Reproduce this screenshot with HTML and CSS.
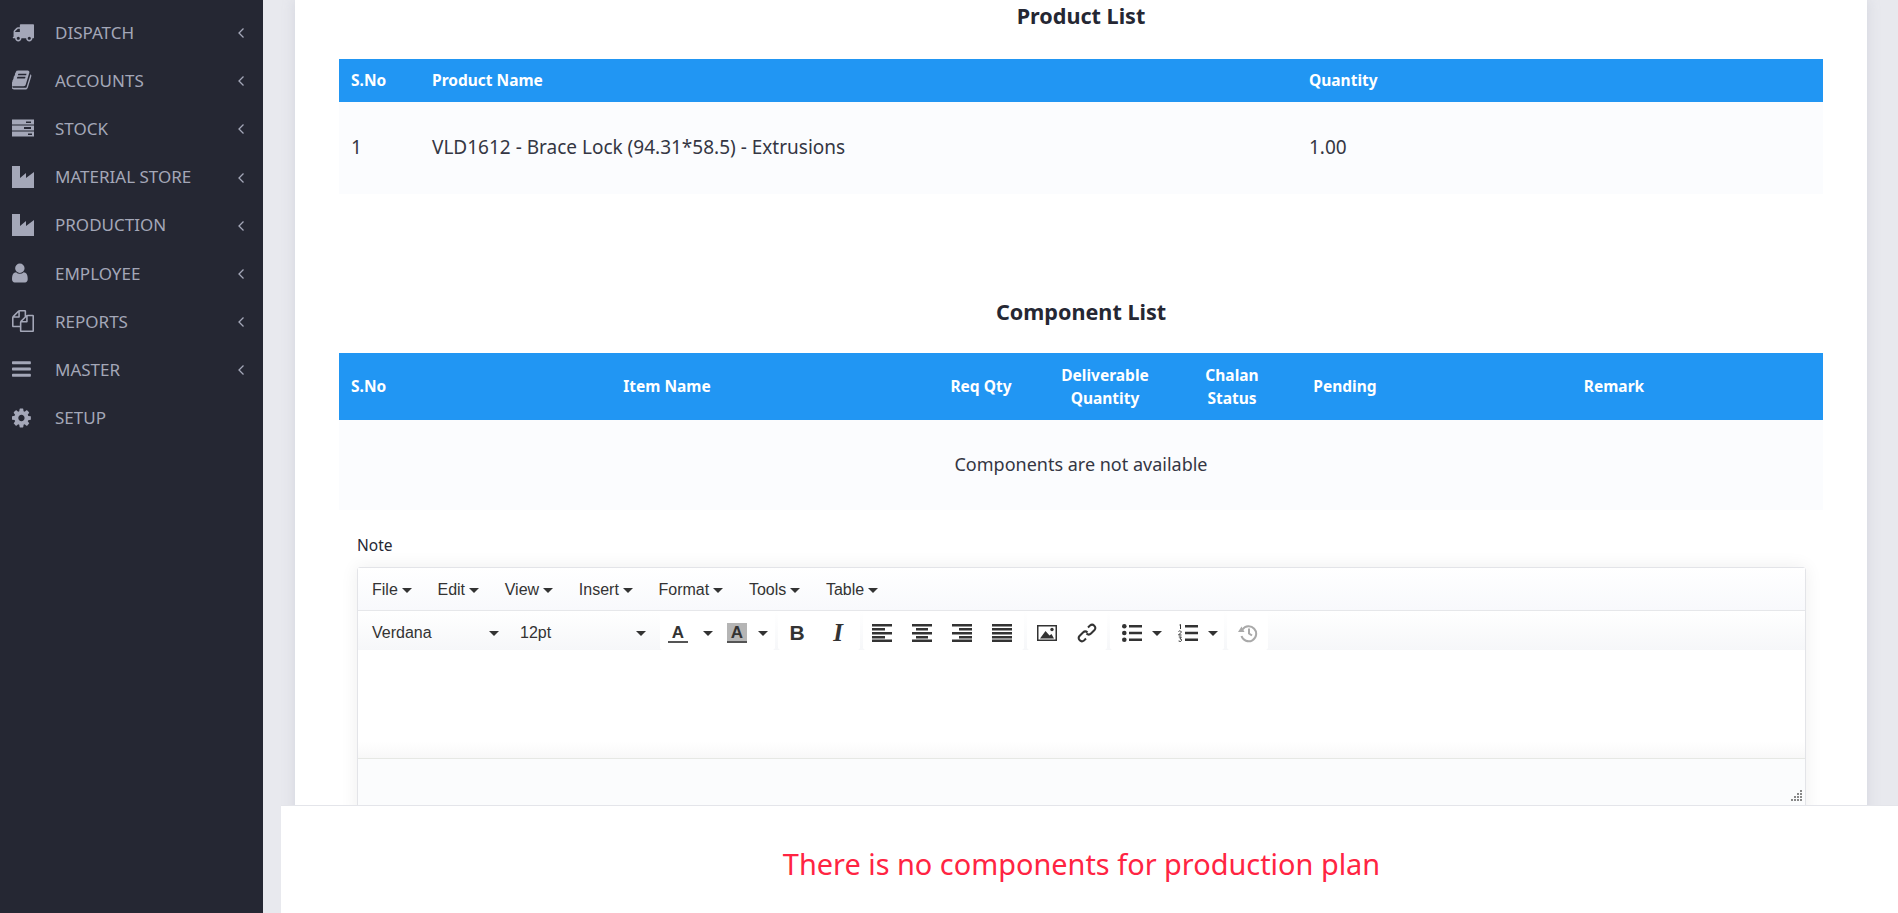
FILE: index.html
```html
<!DOCTYPE html>
<html lang="en">
<head>
<meta charset="utf-8">
<title>Production Plan</title>
<link rel="stylesheet" href="styles.css">
</head>
<body>
<aside class="sidebar">
  <ul class="nav">
    <li class="nav-item"><svg class="nav-icon" viewBox="0 0 1792 1792"><path d="M640 1408q0-52-38-90t-90-38-90 38-38 90 38 90 90 38 90-38 38-90zm-384-512h384v-256h-158q-13 0-22 9l-195 195q-9 9-9 22v30zm1280 512q0-52-38-90t-90-38-90 38-38 90 38 90 90 38 90-38 38-90zm256-1088v1024q0 15-4 26.5t-13.5 18.5-16.5 11.5-23.5 6-22.5 2-25.5 0-22.5-.5q0 106-75 181t-181 75-181-75-75-181h-384q0 106-75 181t-181 75-181-75-75-181h-64q-3 0-22.5.5t-25.5 0-22.5-2-23.5-6-16.5-11.5-13.5-18.5-4-26.5q0-26 19-45t45-19v-320q0-8-.5-35t0-38 2.5-34.5 6.5-37 14-30.5 22.5-30l198-198q19-19 50.5-32t58.5-13h160v-192q0-26 19-45t45-19h1024q26 0 45 19t19 45z"/></svg><span class="nav-label">DISPATCH</span><svg class="nav-caret" viewBox="0 0 8 12"><path d="M6.5 1.5 2 6l4.500 4.500"/></svg></li>
    <li class="nav-item"><svg class="nav-icon" viewBox="90 0 1792 1792"><path d="M1639 478q40 57 18 129l-275 906q-19 64-76.500 107.500t-122.500 43.500h-923q-77 0-148.500-53.500t-99.500-131.500q-24-67-2-127 0-4 3-27t4-37q1-8-3-21.500t-3-19.500q2-11 8-21t16.500-23.500 16.500-23.500q23-38 45-91.500t30-91.500q3-10 .5-30t-.5-28q3-11 17-28t17-23q21-36 42-92t25-90q1-9-2.500-32t.5-28q4-13 22-30.500t22-22.500q19-26 42.500-84.500t27.500-96.500q1-8-3-25.500t-2-26.500q2-8 9-18t18-23 17-21q8-12 16.500-30.500t15-35 16-36 19.500-32 26.500-23.500 36-11.500 47.500 5.500l-1 3q38-9 51-9h761q74 0 114 56t18 130l-274 906q-36 119-71.500 153.500t-128.500 34.500h-869q-27 0-38 15-11 16-1 43 24 70 144 70h923q29 0 56-15.500t35-41.500l300-987q7-22 5-57 38 15 59 43zm-1064 2q-4 13 2 22.500t20 9.500h608q13 0 25.500-9.500t16.500-22.500l21-64q4-13-2-22.500t-20-9.500h-608q-13 0-25.500 9.500t-16.500 22.500zm-83 256q-4 13 2 22.500t20 9.500h608q13 0 25.500-9.500t16.500-22.500l21-64q4-13-2-22.500t-20-9.500h-608q-13 0-25.500 9.500t-16.500 22.500z"/></svg><span class="nav-label">ACCOUNTS</span><svg class="nav-caret" viewBox="0 0 8 12"><path d="M6.500 1.500 2 6l4.500 4.500"/></svg></li>
    <li class="nav-item"><svg class="nav-icon" viewBox="0 0 22 22"><path fill-rule="evenodd" d="M0 2.500h22v5H0zM14 4.500v1.500h5V4.500zM0 8.500h22v5H0zM12 10h7v2h-7zM0 14.500h22v5H0zM16 16.500v1.500h4v-1.500z"/></svg><span class="nav-label">STOCK</span><svg class="nav-caret" viewBox="0 0 8 12"><path d="M6.500 1.500 2 6l4.500 4.500"/></svg></li>
    <li class="nav-item"><svg class="nav-icon" viewBox="0 0 22 22"><path d="M0 0h8v12l6-5v5l8-6v16H0z"/></svg><span class="nav-label">MATERIAL STORE</span><svg class="nav-caret" viewBox="0 0 8 12"><path d="M6.500 1.500 2 6l4.500 4.500"/></svg></li>
    <li class="nav-item"><svg class="nav-icon" viewBox="0 0 22 22"><path d="M0 0h8v12l6-5v5l8-6v16H0z"/></svg><span class="nav-label">PRODUCTION</span><svg class="nav-caret" viewBox="0 0 8 12"><path d="M6.500 1.500 2 6l4.500 4.500"/></svg></li>
    <li class="nav-item"><svg class="nav-icon" viewBox="256 0 1792 1792"><path d="M1536 1399q0 109-62.500 187t-150.500 78h-854q-88 0-150.500-78t-62.500-187q0-85 8.500-160.500t31.500-152 58.500-131 94-89 134.500-34.500q131 128 313 128t313-128q76 0 134.500 34.500t94 89 58.500 131 31.500 152 8.500 160.500zm-256-887q0 159-112.500 271.500t-271.500 112.500-271.500-112.500-112.500-271.500 112.500-271.500 271.500-112.500 271.500 112.500 112.500 271.500z"/></svg><span class="nav-label">EMPLOYEE</span><svg class="nav-caret" viewBox="0 0 8 12"><path d="M6.500 1.500 2 6l4.500 4.500"/></svg></li>
    <li class="nav-item"><svg class="nav-icon" viewBox="0 0 1792 1792"><path d="M1696 384q40 0 68 28t28 68v1216q0 40-28 68t-68 28h-960q-40 0-68-28t-28-68v-288h-544q-40 0-68-28t-28-68v-672q0-40 20-88t48-76l408-408q28-28 76-48t88-20h416q40 0 68 28t28 68v328q68-40 128-40h416zm-544 213l-299 299h299v-299zm-640-384l-299 299h299v-299zm196 647l316-316v-416h-384v416q0 40-28 68t-68 28h-416v640h512v-256q0-40 20-88t48-76zm956 804v-1152h-384v416q0 40-28 68t-68 28h-416v640h896z"/></svg><span class="nav-label">REPORTS</span><svg class="nav-caret" viewBox="0 0 8 12"><path d="M6.500 1.500 2 6l4.500 4.500"/></svg></li>
    <li class="nav-item"><svg class="nav-icon" viewBox="128 0 1792 1792"><path d="M1664 1344v128q0 26-19 45t-45 19h-1408q-26 0-45-19t-19-45v-128q0-26 19-45t45-19h1408q26 0 45 19t19 45zm0-512v128q0 26-19 45t-45 19h-1408q-26 0-45-19t-19-45v-128q0-26 19-45t45-19h1408q26 0 45 19t19 45zm0-512v128q0 26-19 45t-45 19h-1408q-26 0-45-19t-19-45v-128q0-26 19-45t45-19h1408q26 0 45 19t19 45z"/></svg><span class="nav-label">MASTER</span><svg class="nav-caret" viewBox="0 0 8 12"><path d="M6.500 1.500 2 6l4.500 4.500"/></svg></li>
    <li class="nav-item"><svg class="nav-icon" viewBox="128 0 1792 1792"><path d="M1152 896q0-106-75-181t-181-75-181 75-75 181 75 181 181 75 181-75 75-181zm512-109v222q0 12-8 23t-20 13l-185 28q-19 54-39 91 35 50 107 138 10 12 10 25t-9 23q-27 37-99 108t-94 71q-12 0-26-9l-138-108q-44 23-91 38-16 136-29 186-7 28-36 28h-222q-14 0-24.500-8.500t-11.500-21.500l-28-184q-49-16-90-37l-141 107q-10 9-25 9-14 0-25-11-126-114-165-168-7-10-7-23 0-12 8-23 15-21 51-66.500t54-70.500q-27-50-41-99l-183-27q-13-2-21-12.500t-8-23.500v-222q0-12 8-23t19-13l186-28q14-46 39-92-40-57-107-138-10-12-10-24 0-10 9-23 26-36 98.500-107.500t94.500-71.500q13 0 26 10l138 107q44-23 91-38 16-136 29-186 7-28 36-28h222q14 0 24.500 8.500t11.500 21.500l28 184q49 16 90 37l142-107q9-9 24-9 13 0 25 10 129 119 165 170 7 8 7 22 0 12-8 23-15 21-51 66.500t-54 70.500q26 50 41 98l183 28q13 2 21 12.500t8 23.500z"/></svg><span class="nav-label">SETUP</span></li>
  </ul>
</aside>
<main class="main">
  <section class="card">
    <h2 class="title">Product List</h2>
    <table class="tbl">
      <colgroup><col class="p1"><col class="p2"><col></colgroup>
      <thead><tr class="head-row-short"><th>S.No</th><th>Product Name</th><th>Quantity</th></tr></thead>
      <tbody><tr class="prod-row"><td>1</td><td>VLD1612 - Brace Lock (94.31*58.5) - Extrusions</td><td>1.00</td></tr></tbody>
    </table>
    <h2 class="title title-second">Component List</h2>
    <table class="tbl">
      <colgroup><col class="c1"><col class="c2"><col class="c3"><col class="c4"><col class="c5"><col class="c6"><col></colgroup>
      <thead><tr class="head-row-tall"><th>S.No</th><th class="ctr">Item Name</th><th class="ctr">Req Qty</th><th class="ctr">Deliverable Quantity</th><th class="ctr">Chalan Status</th><th class="ctr">Pending</th><th class="ctr">Remark</th></tr></thead>
      <tbody><tr class="empty-row"><td class="ctr" colspan="7">Components are not available</td></tr></tbody>
    </table>
    <div class="note">
      <label class="note-label">Note</label>
      <div class="editor">
        <div class="menubar">
          <span class="menu">File<i class="caret"></i></span>
          <span class="menu">Edit<i class="caret"></i></span>
          <span class="menu">View<i class="caret"></i></span>
          <span class="menu">Insert<i class="caret"></i></span>
          <span class="menu">Format<i class="caret"></i></span>
          <span class="menu">Tools<i class="caret"></i></span>
          <span class="menu">Table<i class="caret"></i></span>
        </div>
        <div class="toolbar">
          <div class="group group-selects">
            <span class="select select-font">Verdana<i class="caret"></i></span>
            <span class="select select-size">12pt<i class="caret"></i></span>
          </div>
          <div class="group group-colors">
            <span class="color-a">A</span><i class="caret caret-a"></i>
            <span class="color-a color-bg">A</span><i class="caret caret-b"></i>
          </div>
          <div class="group group-format">
            <span class="tb tb-bold">B</span>
            <span class="tb tb-italic">I</span>
          </div>
          <div class="group group-align">
            <svg class="tb-icon" viewBox="0 0 20 18"><path d="M0 0h20v2.400H0zM0 4h13v2.400H0zM0 8h20v2.400H0zM0 12h13v2.400H0zM0 15.600h20v2.400H0z"/></svg>
            <svg class="tb-icon" viewBox="0 0 20 18"><path d="M0 0h20v2.400H0zM4 4h12v2.400H4zM0 8h20v2.400H0zM4 12h12v2.400H4zM0 15.600h20v2.400H0z"/></svg>
            <svg class="tb-icon" viewBox="0 0 20 18"><path d="M0 0h20v2.400H0zM7 4h13v2.400H7zM0 8h20v2.400H0zM7 12h13v2.400H7zM0 15.600h20v2.400H0z"/></svg>
            <svg class="tb-icon" viewBox="0 0 20 18"><path d="M0 0h20v2.400H0zM0 4h20v2.400H0zM0 8h20v2.400H0zM0 12h20v2.400H0zM0 15.600h20v2.400H0z"/></svg>
          </div>
          <div class="group group-media">
            <svg class="tb-icon" viewBox="0 0 20 18"><path fill-rule="evenodd" d="M0 1h20v16H0zM1.500 2.500v13h17v-13z"/><path d="M3 14.500 8.500 7l4 4.500 2-1.500L17 14.500z"/><circle cx="15" cy="5.500" r="1.700"/></svg>
            <svg class="tb-icon tb-link" viewBox="0 0 20 20"><path d="M11 4.500 13 2.500a3.200 3.200 0 0 1 4.500 4.500l-3.500 3.500a3.200 3.200 0 0 1-4.500 0M9 15.500 7 17.500A3.200 3.200 0 0 1 2.500 13L6 9.500a3.200 3.200 0 0 1 4.500 0"/></svg>
          </div>
          <div class="group group-lists">
            <svg class="tb-icon" viewBox="0 0 20 18"><circle cx="2.300" cy="2.300" r="2.300"/><circle cx="2.300" cy="9" r="2.300"/><circle cx="2.300" cy="15.700" r="2.300"/><path d="M7 1h13v2.400H7zM7 7.800h13v2.400H7zM7 14.500h13v2.400H7z"/></svg>
            <i class="caret caret-list"></i>
            <svg class="tb-icon tb-num" viewBox="0 0 20 18"><path d="M7 1h13v2.400H7zM7 7.800h13v2.400H7zM7 14.500h13v2.400H7z"/><path class="num-stroke" d="M1.500 1 2.500.500V5M.500 7.500q1-1 2-.500t.5 1.500L.500 11H3.500M.800 13h2.500L2 14.800q1.800 0 1.500 1.700T.600 17"/></svg>
            <i class="caret caret-list"></i>
          </div>
          <div class="group group-history">
            <svg class="tb-icon tb-undo" viewBox="0 0 20 20"><path class="undo-line" d="M4.500 6.500a7.500 7.500 0 1 1-1 6.500M11 5.500v5l3 2"/><path class="undo-head" d="M0 9l6.500 0-3-5.500z"/></svg>
          </div>
        </div>
        <div class="edit-area"></div>
        <div class="statusbar"><svg class="grip" viewBox="0 0 12 12"><path d="M10 0h2v2h-2zM10 3h2v2h-2zM7 3h2v2H7zM10 6h2v2h-2zM7 6h2v2H7zM4 6h2v2H4zM10 9h2v2h-2zM7 9h2v2H7zM4 9h2v2H4zM1 9h2v2H1z"/></svg></div>
      </div>
    </div>
  </section>
</main>
<footer class="footer">There is no components for production plan</footer>
</body>
</html>
```
FILE: styles.css
```css
* { box-sizing: border-box; }
html { height: 100%; overflow: hidden; }
body {
  margin: 0;
  height: 100vh;
  display: flex;
  overflow: hidden;
  background: #e8e9ee;
  font-family: "Noto Sans", "Liberation Sans", sans-serif;
  color: #252733;
}

/* Sidebar */
.sidebar { width: 263px; flex: none; background: #252733; }
.nav { list-style: none; margin: 0; padding: 8px 0 0 12px; }
.nav-item { height: 48.2px; display: flex; align-items: center; color: #a4a7b8; }
.nav-icon { width: 22px; height: 22px; fill: #a4a7b8; flex: none; }
.nav-label { margin-left: 21px; flex: 1; font-size: 17px; }
.nav-caret { width: 8px; height: 12px; margin: 2px 18px 0 0; fill: none; stroke: #a4a7b8; stroke-width: 1.300; flex: none; }

/* Main */
.main { flex: 1; height: 100vh; overflow: hidden; padding: 0 31px 0 32px; min-width: 0; }
.card { background: #fff; padding: 0 44px; height: 100%; overflow: hidden; box-shadow: 0 0 12px rgba(150, 155, 175, .25); }
.title { margin: 0 0 27px; height: 32px; line-height: 32px; text-align: center; font-size: 21.600px; font-weight: 700; color: #252733; }
.title-second { margin: 102px 0 25px; }

/* Tables */
.tbl { width: 100%; border-collapse: collapse; table-layout: fixed; }
.tbl th { background: #2196f3; color: #fff; font-size: 15.500px; line-height: 23px; font-weight: 700; text-align: left; padding: 0 12px; }
.tbl td { background: #fbfcfe; font-size: 18px; padding: 0 12px 2px; color: #343643; }
.tbl .ctr { text-align: center; }
.p1 { width: 81px; }
.p2 { width: 877px; }
.c1 { width: 64px; }
.c2 { width: 528px; }
.c3 { width: 100px; }
.c4 { width: 148px; }
.c5 { width: 106px; }
.c6 { width: 120px; }
.head-row-short { height: 43px; }
.prod-row { height: 92px; }
.tbl .prod-row td { font-size: 19px; }
.head-row-tall { height: 67px; }
.empty-row { height: 90px; }

/* Note + editor */
.note { padding: 0 17px 0 18px; }
.note-label { display: block; margin-top: 24px; height: 22px; line-height: 22px; font-size: 15.500px; color: #252733; }
.editor {
  margin-top: 11px;
  border: 1px solid #e3e4e8;
  border-radius: 3px;
  font-family: "Liberation Sans", Arial, sans-serif;
  color: #333;
  box-shadow: 0 0 18px rgba(0, 0, 0, .07);
}
.menubar { height: 43px; display: flex; align-items: center; padding: 2px 0 0 14px; gap: 25.700px; font-size: 16px; background: linear-gradient(#fff, #f8f9fc); border-bottom: 1px solid #e6e7ea; }
.menu { display: flex; align-items: center; }
.caret { display: inline-block; width: 0; height: 0; border: 5px solid transparent; border-top-color: #333; border-bottom: 0; margin-left: 4px; }
.toolbar { height: 39px; display: flex; align-items: stretch; font-size: 16px; background: linear-gradient(#fff, #f6f7f9); }
.group { display: flex; align-items: center; padding-top: 5px; background: #fff; border-radius: 3px; }
.select { display: flex; align-items: center; }
.select .caret { margin-left: auto; }
.group-selects { padding-left: 14px; background: transparent; }
.select-font { width: 127px; }
.select-size { width: 126px; margin-left: 21px; }
.group-colors { margin-left: 14px; padding-left: 8px; padding-right: 7px; }
.color-a { width: 20px; height: 20px; line-height: 19px; text-align: center; font-weight: 700; font-size: 17px; border-bottom: 2px solid #555; }
.color-bg { background: #b5b5b5; }
.caret-a { margin-left: 15px; margin-right: 14px; }
.caret-b { margin-left: 11px; }
.group-format { margin-left: 3px; padding-left: 11px; padding-right: 14px; }
.tb { width: 16px; text-align: center; line-height: 22px; color: #333; }
.tb-bold { font-size: 21px; font-weight: 700; }
.tb-italic { font-family: "Liberation Serif", serif; font-size: 25px; font-style: italic; font-weight: 700; margin-left: 25px; }
.tb-icon { width: 20px; height: 18px; fill: #333; flex: none; }
.group-align { margin-left: 3px; padding-left: 9px; padding-right: 12px; gap: 20px; }
.group-media { margin-left: 3px; padding-left: 10px; padding-right: 10px; gap: 20px; }
.tb-link { height: 20px; fill: none; stroke: #333; stroke-width: 2; }
.group-lists { margin-left: 3px; padding-left: 12px; padding-right: 6px; }
.caret-list { margin-left: 10px; }
.tb-num { margin-left: 16px; }
.num-stroke { fill: none; stroke: #333; stroke-width: 1; }
.group-history { margin-left: 3px; padding-left: 11px; padding-right: 10px; }
.tb-undo { height: 20px; }
.undo-line { fill: none; stroke: #a9a9a9; stroke-width: 2; }
.undo-head { fill: #a9a9a9; }
.edit-area { height: 109px; background: linear-gradient(#fff 85%, #f8f8f8); border-bottom: 1px solid #e6e8e4; }
.statusbar { height: 60px; display: flex; justify-content: flex-end; padding: 31px 3px 0 0; background: #fbfcfd; }
.grip { width: 12px; height: 12px; fill: #888; }

/* Footer overlay */
.footer {
  position: fixed;
  left: 281px;
  right: 0;
  bottom: 0;
  height: 108px;
  display: flex;
  align-items: center;
  justify-content: center;
  background: #fff;
  border-top: 1px solid #e4e5ea;
  color: #ff2442;
  font-size: 28.900px;
  padding: 7px 16px 0 0;
}
```
